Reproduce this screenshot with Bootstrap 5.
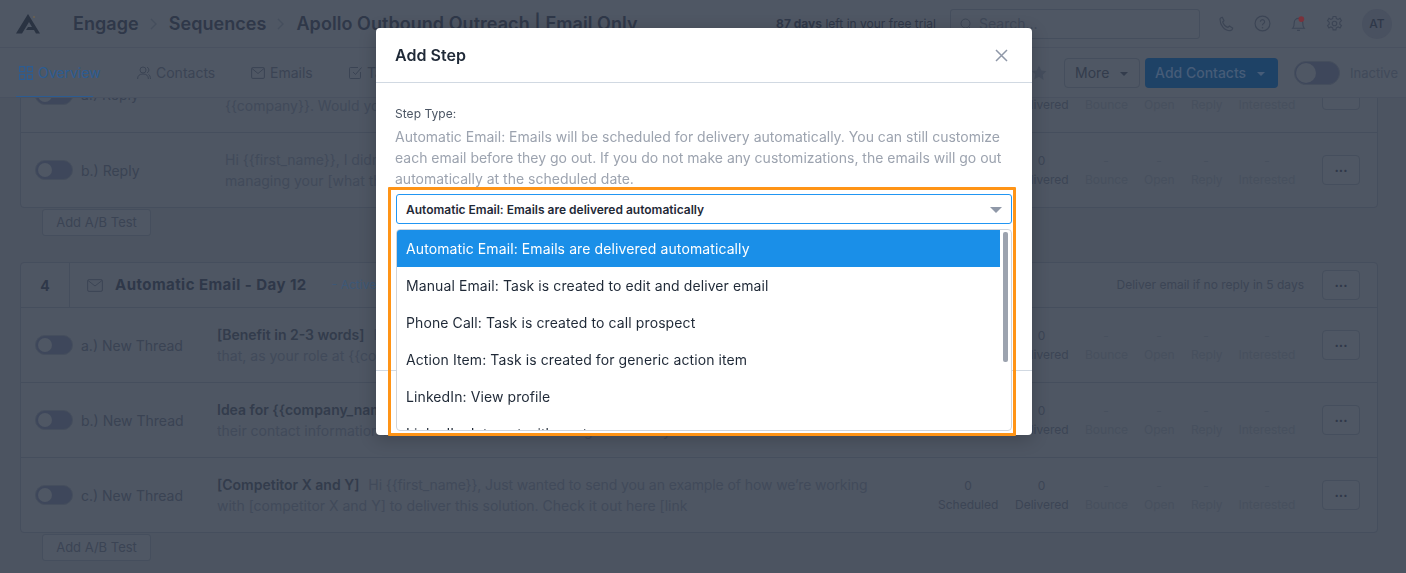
<!doctype html>
<html lang="en"><head><meta charset="utf-8"><title>Add Step</title>
<link rel="stylesheet" href="https://cdn.jsdelivr.net/npm/bootstrap@5.3.0/dist/css/bootstrap.min.css">
<style>
html,body{height:100%;overflow:hidden}
body{font-family:Inter,"Liberation Sans",sans-serif;background:#4c5461;color:#3a4353;font-size:14px}
.shell{height:573px;display:flex;flex-direction:column;overflow:hidden}
.topbar{height:48px;background:#4f5764;border-bottom:1px solid #495160;flex:none;position:relative;z-index:2}
.crumb{font-size:18px;font-weight:600;color:#2f3849;white-space:nowrap;line-height:1;letter-spacing:.05px}
.chev{color:#454e5d;margin:0 11px}
.trial{font-size:12px;color:#2f3849;white-space:nowrap;position:relative}
.search-box{width:250px;height:30px;border:1px solid #454e5d;border-radius:3px;padding:0 28px;color:#3f4858;line-height:28px;background:#4f5764}
.ico{color:#3c4555;flex:none}
.avatar{width:30px;height:30px;border-radius:50%;background:#495160;color:#2f3849;font-size:12px;font-weight:500;display:flex;align-items:center;justify-content:center}
.tabbar{height:50px;background:#4f5764;border-bottom:1px solid #495160;flex:none;position:relative;z-index:2}
.tabitem{display:flex;align-items:center;gap:5px;color:#3b4454;font-weight:400;position:absolute;top:14px;font-size:14px}
.tab-on{color:#2c5c92;left:19px}
.tab-line{position:absolute;left:16px;top:48px;width:77px;height:1px;background:#2c5c92}
.more-btn{height:30px;width:76px;border:1px solid #454e5d;border-radius:4px;background:#4f5764;color:#333c4c;font-size:14px;font-weight:400;text-align:left;padding:0 0 0 10px}
.add-btn{height:30px;width:133px;border-radius:4px;background:#1e4266;color:#465c78;font-size:14px;font-weight:500;border:0;text-align:left;padding:0 0 0 10px;margin-left:5px}
.caret-dn{display:inline-block;border:4px solid transparent;border-top-color:currentColor;border-bottom:0;vertical-align:2px;margin-left:11px}
.tgl{display:inline-block;width:38px;height:20px;border-radius:10px;background:#3e475b;border:1px solid #454e5d;position:relative;flex:none}
.tgl::after{content:"";position:absolute;left:2px;top:2px;width:14px;height:14px;border-radius:50%;background:#4f5764}
.tgl-lg{width:46px;height:24px;border-radius:12px;margin-left:16px}
.tgl-lg::after{width:20px;height:20px;left:1px;top:1px}
.inactive{margin:2px 8px 0 10px;color:#414a5a;font-size:13px}
.star{margin-right:17px;color:#454e5d}
.content{flex:1;overflow:hidden;padding:0 28px 0 20px}
.step{border:1px solid #454e5d;border-radius:4px;background:#4e5663;--bs-card-bg:#4e5663}
.step-first{margin-top:-42px}
.strow{height:75px;border-top:1px solid #454e5d;display:flex;align-items:center;padding-left:14px;padding-right:17px}
.strow:first-child{border-top:0;height:75px}
.lbl{display:flex;align-items:center;gap:8px;width:182px;flex:none;color:#3a4353;font-size:14px}
.lbl-reply{width:190px}
.msg{width:665px;flex:none;line-height:21px;color:#414a5a;white-space:nowrap;overflow:hidden}
.msg-reply{width:657px}
.msg b{font-weight:600;color:#333c4c;margin-right:5px}
.tight{letter-spacing:-.1px}
.stats{margin-left:auto;display:flex;gap:17px;text-align:center;font-size:12px;line-height:19px;color:#3c4555;align-items:center;white-space:nowrap}
.stat-faint{color:#47505e}
.w60{width:60px}.w53{width:53px}.w42{width:42px}.w30{width:30px}.w58{width:58px}
.dots{width:38px;height:30px;border:1px solid #454e5d;border-radius:4px;background:#4f5764;margin-left:9px;color:#2f3849;font-weight:700;line-height:1;font-size:13px;padding:0 0 6px;flex:none}
.dots-hd{margin-left:18px}
.ab-btn{height:27px;width:109px;margin:1px 0 0 22px;border:1px solid #454e5d;border-radius:3px;background:#4f5764;color:#3b4454;font-size:13px;padding:0;display:block}
.gap28{height:26px}
.hdrow{height:44px;display:flex;align-items:center;padding-right:17px}
.numcell{width:49px;height:100%;border-right:1px solid #454e5d;display:flex;align-items:center;justify-content:center;font-weight:700;color:#2f3849;font-size:14px;flex:none}
.mail-ico{margin-left:17px}
.hd-title{font-size:15px;font-weight:700;color:#2f3849;margin:0 25px 0 12px;letter-spacing:.45px}
.active-tag{font-size:12px;color:#3d5877}
.cond{font-size:12px;color:#3c4555;margin-left:auto}
.modal.mod-wrap{display:block;padding-left:2px;z-index:1055}
.mod-wrap .modal-dialog{max-width:656px;margin:28px auto}
.mod-wrap .modal-content{border:0;border-radius:4px;height:407px;box-shadow:0 4px 18px rgba(0,0,0,.2)}
.mod-wrap .modal-header{height:55px;padding:0 19px;border-bottom:1px solid #d1d9e2}
.mod-wrap .modal-title{font-size:16px;font-weight:600;color:#1f2937;letter-spacing:.05px}
.x-btn{background:none;border:0;padding:0;color:#8f98a8;line-height:0;margin-right:5px}
.mod-wrap .modal-body{padding:24px 20px 0 19px;height:288px;flex:none;border-bottom:1px solid #d1d9e2}
.step-lbl{font-size:12px;line-height:15px;color:#4b5563;font-weight:400;margin:-1px 0 5px;display:block;letter-spacing:.05px}
.help{color:#9ca3af;line-height:21px;font-size:14px;margin:0 0 5px}
.pick{position:relative;width:616px;margin-left:1px}
.pick-input{height:30px;border:1px solid #2196f3;border-radius:3px;font-size:12px;font-weight:600;color:#1f2937;display:flex;align-items:center;padding:2px 0 0 9px;background:#fff}
.pick-arrow{position:absolute;right:10px;top:13px;border:6px solid transparent;border-top-color:#8f98a8;border-bottom:0}
.pick-menu{position:absolute;left:0;right:0;top:35px;height:202px;border:1px solid #d1d5db;border-radius:4px;background:#fff;overflow:hidden;z-index:3}
.opt{height:37px;display:flex;align-items:center;padding-left:9px;color:#1f2937;font-size:14px;width:603px;white-space:nowrap;letter-spacing:.1px}
.opt-on{background:#1a8fe8;color:#fff}
.sbar{position:absolute;right:3px;top:2px;width:5px;height:130px;border-radius:2px;background:#9ca3af}
.annot{position:absolute;left:-8px;top:-7px;width:628px;height:249px;border:3px solid #ff9416;border-radius:1px;pointer-events:none;z-index:4}
</style></head><body>
<div class="shell">
 <header class="topbar d-flex align-items-center">
  <svg class="ms-3" width="24" height="21" viewBox="0 0 24 21"><path fill="#2a3342" d="M12 1 0 20.500h6L13 9l3 5h-4l-2 3h8l2 3.500h4z"/><circle cx="18" cy="4" r="1" fill="#6d6250"/></svg>
  <div class="d-flex align-items-center" style="margin-left:33px">
   <span class="crumb">Engage</span><svg class="chev" width="8" height="12" viewBox="0 0 8 12"><path d="m1 1 5 5-5 5" fill="none" stroke="currentColor" stroke-width="1.300"/></svg>
   <span class="crumb">Sequences</span><svg class="chev" width="8" height="12" viewBox="0 0 8 12"><path d="m1 1 5 5-5 5" fill="none" stroke="currentColor" stroke-width="1.300"/></svg>
   <span class="crumb">Apollo Outbound Outreach | Email Only</span>
  </div>
  <div class="ms-auto d-flex align-items-center">
   <span class="trial"><b class="fw-bold">87 days</b> left in your free trial</span>
   <div class="search-box position-relative" style="margin-left:14px">Search...
    <svg class="position-absolute ico" style="left:9px;top:8px" width="13" height="13" viewBox="0 0 13 13"><circle cx="5.500" cy="5.500" r="4.500" fill="none" stroke="currentColor"/><path d="m9 9 3.500 3.500" stroke="currentColor"/></svg>
   </div>
   <svg class="ico" style="margin-left:18px" width="16" height="16" viewBox="0 0 24 24"><path fill="none" stroke="currentColor" stroke-width="1.700" d="M3 5c0-1.500 2-3 3.500-3L9 7 7 9c1 3 4.500 7 8 8l2-2 5 3c0 2-2 4-4 4C9.500 22 3 13.500 3 5z"/></svg>
   <svg class="ico" style="margin-left:20px" width="17" height="17" viewBox="0 0 24 24"><circle cx="12" cy="12" r="10.500" fill="none" stroke="currentColor" stroke-width="1.600"/><path d="M9 9.500a3 3 0 1 1 4.500 2.600c-1 .6-1.500 1.200-1.500 2.400" fill="none" stroke="currentColor" stroke-width="1.600"/><circle cx="12" cy="18" r="1.100" fill="currentColor"/></svg>
   <svg class="ico" style="margin-left:19px" width="17" height="18" viewBox="0 0 24 24"><path d="M4 18c2-2 2-4 2-8a6 6 0 0 1 12 0c0 4 0 6 2 8zM10 21h4" fill="none" stroke="currentColor" stroke-width="1.600"/><circle cx="16" cy="5" r="4" fill="#7a323b"/></svg>
   <svg class="ico" style="margin-left:19px" width="17" height="17" viewBox="0 0 24 24"><circle cx="12" cy="12" r="3.200" fill="none" stroke="currentColor" stroke-width="1.600"/><path d="M10 2h4l.6 3 2.500 1.200 2.700-1.500 2 3.400-2.300 2 0 2.800 2.300 2-2 3.400-2.700-1.500-2.500 1.200-.6 3h-4l-.6-3-2.500-1.200-2.700 1.500-2-3.400 2.300-2v-2.800l-2.300-2 2-3.400 2.700 1.500L9.400 5z" fill="none" stroke="currentColor" stroke-width="1.500"/></svg>
   <div class="avatar" style="margin-left:19px;margin-right:14px">AT</div>
  </div>
 </header>
 <nav class="tabbar d-flex align-items-center justify-content-end">
  <div class="tabitem tab-on"><svg width="14" height="14" viewBox="0 0 14 14" fill="none" stroke="currentColor" stroke-width="1.200"><rect x=".6" y=".6" width="5" height="5"/><rect x="8.400" y=".6" width="5" height="5"/><rect x=".6" y="8.400" width="5" height="5"/><rect x="8.400" y="8.400" width="5" height="5"/></svg>Overview</div>
  <div class="tab-line"></div>
  <div class="tabitem" style="left:137px"><svg width="14" height="14" viewBox="0 0 14 14" fill="none" stroke="currentColor"><circle cx="6" cy="4" r="3"/><path d="M.6 13c0-3.500 2-5 5.400-5s5.400 1.500 5.400 5M10 1.200a3 3 0 0 1 0 5.600M11.500 8.500c1.300.7 2 2.200 2 4.500"/></svg>Contacts</div>
  <div class="tabitem" style="left:251px"><svg width="14" height="12" viewBox="0 0 14 12" fill="none" stroke="currentColor"><rect x=".6" y=".6" width="12.800" height="10.800" rx="1"/><path d="m1 1.500 6 5 6-5"/></svg>Emails</div>
  <div class="tabitem" style="left:349px"><svg width="13" height="13" viewBox="0 0 13 13" fill="none" stroke="currentColor"><path d="M11.500 6v5.500a1 1 0 0 1-1 1h-9a1 1 0 0 1-1-1v-9a1 1 0 0 1 1-1H9"/><path d="m4 6 2.500 2.500L12.500 1.500"/></svg>Tasks</div>
  <svg class="ico star" width="16" height="16" viewBox="0 0 24 24"><path fill="currentColor" d="m12 1 3.400 7.200 7.600 1-5.500 5.400 1.400 7.900L12 17.700l-6.900 3.800 1.400-7.900L1 9.200l7.600-1z"/></svg>
  <button class="more-btn" type="button">More<span class="caret-dn"></span></button>
  <button class="add-btn" type="button">Add Contacts<span class="caret-dn"></span></button>
  <span class="tgl tgl-lg"></span>
  <span class="inactive">Inactive</span>
 </nav>
 <main class="content">
  <section class="card step step-first">
   <div class="strow"><div class="lbl lbl-reply"><span class="tgl"></span>a.) Reply</div>
    <div class="msg msg-reply">&nbsp;<br>{{company}}. Would you be open to a quick chat this week?</div>
    <div class="stats"><div class="w60">0<br>Scheduled</div><div class="w53">0<br>Delivered</div><div class="stat-faint w42">-<br>Bounce</div><div class="stat-faint w30">-<br>Open</div><div class="stat-faint w30">-<br>Reply</div><div class="stat-faint w58">-<br>Interested</div><button class="dots" type="button">...</button></div></div>
   <div class="strow"><div class="lbl lbl-reply"><span class="tgl"></span>b.) Reply</div>
    <div class="msg msg-reply">Hi {{first_name}}, I didn't hear back, so I wanted to ask who is<br>managing your [what this solves] today?</div>
    <div class="stats"><div class="w60">0<br>Scheduled</div><div class="w53">0<br>Delivered</div><div class="stat-faint w42">-<br>Bounce</div><div class="stat-faint w30">-<br>Open</div><div class="stat-faint w30">-<br>Reply</div><div class="stat-faint w58">-<br>Interested</div><button class="dots" type="button">...</button></div></div>
  </section>
  <button class="ab-btn" type="button">Add A/B Test</button>
  <div class="gap28"></div>
  <section class="card step">
   <div class="hdrow"><div class="numcell">4</div>
    <svg class="ico mail-ico" width="16" height="13" viewBox="0 0 16 13" fill="none" stroke="currentColor"><rect x=".6" y=".6" width="14.800" height="11.800" rx="1.500"/><path d="m1 1.500 7 5.500 7-5.500"/></svg>
    <span class="hd-title">Automatic Email - Day 12</span><span class="active-tag">- Active</span>
    <span class="cond">Deliver email if no reply in 5 days</span><button class="dots dots-hd" type="button">...</button></div>
   <div class="strow"><div class="lbl"><span class="tgl"></span>a.) New Thread</div>
    <div class="msg"><b>[Benefit in 2-3 words]</b> Hi {{first_name}}, I noticed<br>that, as your role at {{company_name}}, you may be looking for this.</div>
    <div class="stats"><div class="w60">0<br>Scheduled</div><div class="w53">0<br>Delivered</div><div class="stat-faint w42">-<br>Bounce</div><div class="stat-faint w30">-<br>Open</div><div class="stat-faint w30">-<br>Reply</div><div class="stat-faint w58">-<br>Interested</div><button class="dots" type="button">...</button></div></div>
   <div class="strow"><div class="lbl"><span class="tgl"></span>b.) New Thread</div>
    <div class="msg"><b>Idea for {{company_name}}</b> Hi {{first_name}}, I found<br>their contact information is hard to find but I am reaching out directly</div>
    <div class="stats"><div class="w60">0<br>Scheduled</div><div class="w53">0<br>Delivered</div><div class="stat-faint w42">-<br>Bounce</div><div class="stat-faint w30">-<br>Open</div><div class="stat-faint w30">-<br>Reply</div><div class="stat-faint w58">-<br>Interested</div><button class="dots" type="button">...</button></div></div>
   <div class="strow"><div class="lbl"><span class="tgl"></span>c.) New Thread</div>
    <div class="msg"><b>[Competitor X and Y]</b> <span class="tight">Hi {{first_name}}, Just wanted to send you an example of how we’re working</span><br>with [competitor X and Y] to deliver this solution. Check it out here [link</div>
    <div class="stats"><div class="w60">0<br>Scheduled</div><div class="w53">0<br>Delivered</div><div class="stat-faint w42">-<br>Bounce</div><div class="stat-faint w30">-<br>Open</div><div class="stat-faint w30">-<br>Reply</div><div class="stat-faint w58">-<br>Interested</div><button class="dots" type="button">...</button></div></div>
  </section>
  <button class="ab-btn" type="button">Add A/B Test</button>
 </main>
</div>
<div class="modal mod-wrap" tabindex="-1">
 <div class="modal-dialog">
  <div class="modal-content">
   <div class="modal-header">
    <h5 class="modal-title">Add Step</h5>
    <button class="x-btn ms-auto" type="button" aria-label="Close"><svg width="13" height="13" viewBox="0 0 13 13"><path d="m1 1 11 11M12 1 1 12" stroke="currentColor" stroke-width="1.500"/></svg></button>
   </div>
   <div class="modal-body">
    <label class="step-lbl">Step Type:</label>
    <p class="help">Automatic Email: Emails will be scheduled for delivery automatically. You can still customize each email before they go out. If you do not make any customizations, the emails will go out automatically at the scheduled date.</p>
    <div class="pick">
     <div class="pick-input">Automatic Email: Emails are delivered automatically</div><span class="pick-arrow"></span>
     <div class="pick-menu">
      <div class="opt opt-on">Automatic Email: Emails are delivered automatically</div>
      <div class="opt">Manual Email: Task is created to edit and deliver email</div>
      <div class="opt">Phone Call: Task is created to call prospect</div>
      <div class="opt">Action Item: Task is created for generic action item</div>
      <div class="opt">LinkedIn: View profile</div>
      <div class="opt">LinkedIn: Interact with post</div>
      <span class="sbar"></span>
     </div>
     <div class="annot"></div>
    </div>
   </div>
  </div>
 </div>
</div>
<script src="https://cdn.jsdelivr.net/npm/bootstrap@5.3.0/dist/js/bootstrap.bundle.min.js"></script>
</body></html>
